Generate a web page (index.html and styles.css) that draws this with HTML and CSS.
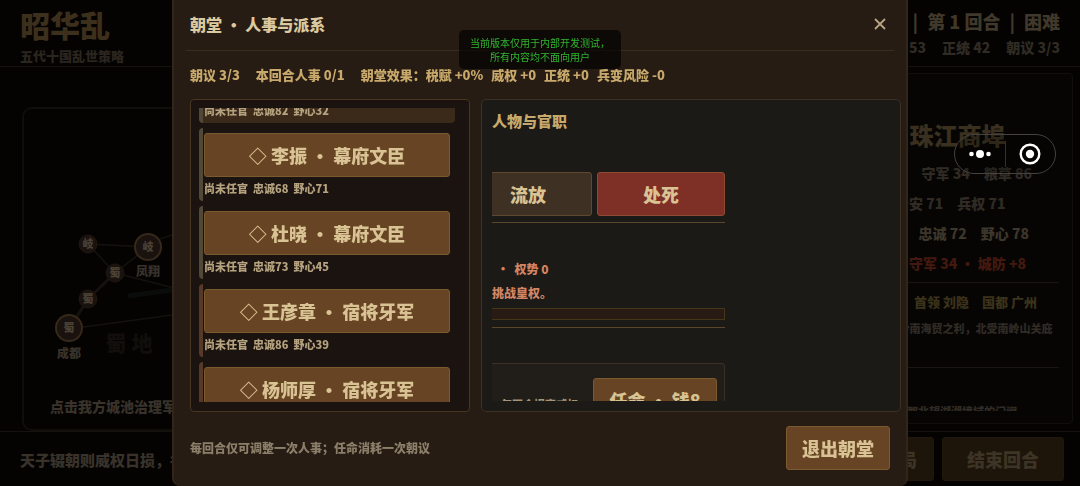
FILE: index.html
```html
<!DOCTYPE html>
<html lang="zh-CN">
<head>
    <meta charset="UTF-8">
    <title>昭华乱</title>
    <meta name="viewport" content="width=device-width, initial-scale=1">
    <link rel="stylesheet" href="styles.css">
</head>
<body>
    <div class="game">
        <header class="topbar">
            <div class="brand">
                <h1>昭华乱</h1>
                <p>五代十国乱世策略</p>
            </div>
            <div class="turn">
                <div class="turn-main"><span>开平元年</span><i>|</i><span>第 1 回合</span><i>|</i><span>困难</span></div>
                <div class="turn-stats"><span>威权 53</span><span>正统 42</span><span>朝议 3/3</span></div>
            </div>
        </header>

        <main class="board">
            <section class="map">
                <svg class="map-canvas" aria-label="地图">
                    <g class="roads">
                        <path d="M64 135L124 138"/>
                        <path d="M64 135L91 164L124 138Q136 127 158 124"/>
                        <path d="M91 164L170 184"/>
                        <path d="M45 220L170 203"/>
                        <path class="main-road" d="M91 164L64 190L45 220"/>
                    </g>
                    <path class="river" d="M104 187L170 178"/>
                    <text class="region" x="105" y="242">蜀 地</text>
                    <g class="town">
                        <circle cx="64" cy="135" r="9"/><text x="64" y="139">岐</text>
                        <circle cx="91" cy="164" r="9"/><text x="91" y="168">蜀</text>
                        <circle cx="64" cy="190" r="9"/><text x="64" y="194">蜀</text>
                    </g>
                    <g class="city">
                        <circle cx="124" cy="138" r="13"/><text x="124" y="142">岐</text>
                        <circle cx="45" cy="219" r="13"/><text x="45" y="223">蜀</text>
                    </g>
                    <g class="city-name">
                        <text x="124" y="167">凤翔</text>
                        <text x="45" y="249">成都</text>
                    </g>
                </svg>
                <p class="map-hint">点击我方城池治理军政</p>
            </section>

            <aside class="city-panel">
                <div class="city-scroll">
                    <h2>清海军 ·&nbsp; 珠江商埠</h2>
                    <p>民心 60　商业 72　守军 34　粮草 86</p>
                    <p>势力　南汉国　治安 71　兵权 71</p>
                    <p class="warm">守将 刘隐　统 78　忠诚 72　野心 78</p>
                    <p class="enemy">敌对势力　南汉　守军 34 · 城防 +8</p>
                    <hr>
                    <p class="leader">中立势力　清海军　首领 刘隐　国都 广州</p>
                    <p class="intro">坐拥 珠江口商埠，得岭南海贸之利，北受南岭山关庇</p>
                    <hr class="wide">
                    <p class="intro">广州城池富庶，岭表诸郡北望湖湘境域的门阙</p>
                </div>
            </aside>
        </main>

        <footer class="bottombar">
            <p>天子辍朝则威权日损，每回合须临朝议政</p>
            <div class="bottom-actions">
                <button type="button">存档布局</button>
                <button type="button" class="end-turn">结束回合</button>
            </div>
        </footer>
    </div>

    <div class="overlay">
        <div class="dialog" role="dialog" aria-labelledby="court-title">
            <header class="dialog-head">
                <h2 id="court-title">朝堂 · 人事与派系</h2>
                <button type="button" class="close" aria-label="关闭">
                    <svg width="12" height="12" viewBox="0 0 12 12"><path d="M1 1L11 11M11 1L1 11"/></svg>
                </button>
            </header>
            <div class="court-stats">
                <span>朝议 3/3</span>
                <span>本回合人事 0/1</span>
                <div class="effects">
                    <span>朝堂效果：税赋 +0%</span>
                    <span>威权 +0</span>
                    <span>正统 +0</span>
                    <span>兵变风险 -0</span>
                </div>
            </div>

            <div class="dialog-body">
                <section class="officials">
                    <div class="official-list">
                        <article class="official selected">
                            <p>尚未任官&nbsp; 忠诚82&nbsp; 野心32</p>
                        </article>
                        <article class="official civil">
                            <button type="button">◇ 李振 · 幕府文臣</button>
                            <p>尚未任官&nbsp; 忠诚68&nbsp; 野心71</p>
                        </article>
                        <article class="official civil">
                            <button type="button">◇ 杜晓 · 幕府文臣</button>
                            <p>尚未任官&nbsp; 忠诚73&nbsp; 野心45</p>
                        </article>
                        <article class="official guard">
                            <button type="button">◇ 王彦章 · 宿将牙军</button>
                            <p>尚未任官&nbsp; 忠诚86&nbsp; 野心39</p>
                        </article>
                        <article class="official guard">
                            <button type="button">◇ 杨师厚 · 宿将牙军</button>
                        </article>
                    </div>
                </section>

                <section class="detail">
                    <h3>人物与官职</h3>
                    <div class="detail-scroll">
                        <div class="punish">
                            <button type="button" class="exile">流放</button>
                            <button type="button" class="execute">处死</button>
                        </div>
                        <div class="faction">
                            <p class="power">·&nbsp; 权势 0</p>
                            <p>挑战皇权。</p>
                            <div class="power-bar"></div>
                        </div>
                        <div class="post">
                            <span>每回合提高威权</span>
                            <button type="button">任命 · 钱8</button>
                        </div>
                    </div>
                </section>
            </div>

            <footer class="dialog-foot">
                <p>每回合仅可调整一次人事；任命消耗一次朝议</p>
                <button type="button">退出朝堂</button>
            </footer>
        </div>
    </div>

    <div class="notice">当前版本仅用于内部开发测试，<br>所有内容均不面向用户</div>

    <div class="capsule">
        <button type="button" aria-label="更多">
            <svg width="24" height="24" viewBox="0 0 24 24"><circle cx="3.5" cy="12" r="2.3"/><circle cx="12" cy="12" r="4"/><circle cx="20.5" cy="12" r="2.3"/></svg>
        </button>
        <button type="button" aria-label="退出">
            <svg width="24" height="24" viewBox="0 0 24 24"><circle class="ring" cx="12" cy="12" r="9.3"/><circle cx="12" cy="12" r="4.2"/></svg>
        </button>
    </div>
</body>
</html>
```

FILE: styles.css
```css
* {
    box-sizing: border-box;
}

body {
    margin: 0;
    height: 100vh;
    overflow: hidden;
    background: #040302;
    color: #38322a;
    font-family: "Noto Sans CJK SC", "Noto Sans", sans-serif;
    font-weight: 900;
}

h1, h2, h3, p {
    margin: 0;
    font-weight: 900;
}

button {
    height: 44px;
    padding: 0;
    border: 1px solid #7b5a30;
    border-radius: 3px;
    background: #674423;
    color: #d9c394;
    font: inherit;
    font-size: 18px;
    white-space: nowrap;
    cursor: pointer;
}

/* 主界面 */
.game {
    height: 100vh;
    display: flex;
    flex-direction: column;
}

.topbar {
    display: flex;
    justify-content: space-between;
    padding: 4px 20px 0;
    height: 67px;
    border-bottom: 1px solid #15110c;
}

.brand h1 {
    font-size: 30px;
    line-height: 40px;
    color: #3c2f1b;
}

.brand p {
    font-size: 13px;
    line-height: 24px;
    color: #2a251f;
}

.turn {
    padding-top: 3px;
}

.turn-main {
    font-size: 18px;
    line-height: 28px;
    text-align: right;
    color: #40382b;
}

.turn-main i {
    margin: 0 9px;
    font-style: normal;
}

.turn-stats {
    display: flex;
    justify-content: flex-end;
    gap: 16px;
    font-size: 14px;
    line-height: 24px;
    color: #302b24;
}

.board {
    flex: 1;
    min-height: 0;
    display: flex;
    gap: 10px;
    padding: 0 7px 0 22px;
}

.map {
    flex: 1;
    margin-top: 40px;
    border: 2px solid #100e0b;
    border-radius: 10px;
    display: flex;
    flex-direction: column;
}

.map-canvas {
    flex: 1;
    width: 100%;
    min-height: 0;
    font-size: 11px;
    text-anchor: middle;
    fill: #4a4034;
    overflow: visible;
}

.roads path {
    fill: none;
    stroke: #15120e;
    stroke-width: 1.5;
}

.roads .main-road {
    stroke-width: 3;
}

.river {
    stroke: #0a0c0b;
    stroke-width: 5;
}

.region {
    font-size: 21px;
    fill: #110e0b;
}

.town circle {
    fill: #1a120e;
    stroke: #1e160f;
}

.city circle {
    fill: #1a120e;
    stroke: #36281a;
    stroke-width: 2;
}

.city-name {
    font-size: 12px;
    fill: #38322a;
}

.map-hint {
    padding: 0 26px 11px;
    font-size: 14px;
    line-height: 24px;
}

.city-panel {
    width: 293px;
    margin: 6px 0 7px;
    padding: 38px 13px 12px 16px;
    border: 1px solid #120e0a;
    border-radius: 4px;
    background: #070504;
}

.city-scroll {
    height: 100%;
    overflow: hidden;
    white-space: nowrap;
}

.city-scroll h2 {
    font-size: 24px;
    line-height: 46px;
    color: #3a301f;
}

.city-scroll p {
    font-size: 14px;
    line-height: 30px;
    color: #302b24;
}

.city-scroll .warm {
    color: #3d362a;
}

.city-scroll .enemy {
    color: #43190f;
}

.city-scroll .leader {
    font-size: 13px;
    color: #3a321a;
}

.city-scroll .intro {
    font-size: 11px;
    line-height: 22px;
    color: #302b24;
}

.city-scroll hr {
    margin: 4px 0;
    border: 0;
    border-top: 1px solid #1a1510;
}

.city-scroll .wide {
    margin: 28px 0 32px;
}

.bottombar {
    display: flex;
    justify-content: space-between;
    padding: 5px 16px 4px 20px;
    border-top: 1px solid #15110c;
}

.bottombar p {
    font-size: 15px;
    line-height: 45px;
}

.bottom-actions {
    display: flex;
    gap: 8px;
}

.bottom-actions button {
    padding: 0 16px;
    border-color: #21170d;
    background: #1d140a;
    color: #3d3425;
}

.bottom-actions .end-turn {
    width: 122px;
}

/* 朝堂弹窗 */
.overlay {
    position: fixed;
    inset: 0;
    display: flex;
    justify-content: center;
}

.dialog {
    width: 92%;
    max-width: 736px;
    height: 100vh;
    display: flex;
    flex-direction: column;
    border: 2px solid #32261a;
    border-width: 0 2px;
    border-radius: 0 0 8px 8px;
    background: #261c14;
}

.dialog-head {
    display: flex;
    align-items: center;
    justify-content: space-between;
    height: 51px;
    margin: 0 12px;
    padding: 0 4px 2px;
    border-bottom: 1px solid #3a2d1e;
}

.dialog-head h2 {
    font-size: 16px;
    line-height: 24px;
    color: #dcc9a0;
}

.close {
    width: 20px;
    height: 24px;
    border: 0;
    background: none;
}

.close svg {
    display: block;
    margin: 0 auto;
    fill: none;
    stroke: #b8a581;
    stroke-width: 1.8;
}

.court-stats {
    display: flex;
    gap: 16px;
    padding: 0 16px;
    font-size: 13px;
    line-height: 48px;
    white-space: nowrap;
    color: #c8a96b;
}

.effects {
    display: flex;
    gap: 8px;
}

.dialog-body {
    flex: 1;
    min-height: 0;
    display: grid;
    grid-template-columns: 2fr 3fr;
    grid-template-rows: 100%;
    gap: 11px;
    margin: 0 5px 0 16px;
}

.officials {
    padding: 8px 14px 9px 8px;
    border: 1px solid #493621;
    border-radius: 4px;
    background: #1b130f;
}

.official-list {
    height: 100%;
    overflow: hidden;
    display: flex;
    flex-direction: column;
    gap: 5px;
}

.official {
    flex: none;
    padding: 5px 5px 0 1px;
    border-left: 4px solid #514837;
    border-radius: 4px;
}

.official.guard {
    border-left-color: #57392a;
}

.official button {
    display: block;
    width: 100%;
}

.official p {
    padding-bottom: 2px;
    font-size: 11px;
    line-height: 22px;
    color: #b5a27f;
}

/* 滚动到顶部边缘外的一项 */
.official.selected {
    height: 15px;
    padding: 0 0 0 1px;
    display: flex;
    align-items: flex-end;
    overflow: hidden;
    border-radius: 0 0 4px 4px;
    background: #3b291a;
}

.detail {
    display: flex;
    flex-direction: column;
    padding: 9px 10px 10px;
    border: 1px solid #3d3123;
    border-radius: 5px;
    background: #1b1a16;
}

.detail h3 {
    font-size: 15px;
    line-height: 24px;
    color: #c8a96b;
}

.detail-scroll {
    flex: 1;
    min-height: 0;
    width: 233px;
    max-width: 100%;
    padding-top: 39px;
    overflow: hidden;
}

.punish {
    display: flex;
    justify-content: flex-end;
    gap: 5px;
    padding-bottom: 6px;
    border-bottom: 1px solid #5b4629;
}

.punish button {
    flex: none;
    width: 128px;
}

.punish .exile {
    border-color: #5d4930;
    background: #3e3023;
}

.punish .execute {
    border-color: #8f4a33;
    background: #7e3027;
}

.faction {
    padding: 34px 0 7px;
    border-bottom: 1px solid #5b4629;
    font-size: 12px;
    line-height: 24px;
    color: #d38462;
}

.power {
    padding-left: 5px;
}

.power-bar {
    height: 12px;
    margin-top: 3px;
    border: 1px solid #453519;
    border-left: 0;
    background: #281b13;
}

.post {
    display: flex;
    justify-content: space-between;
    margin-top: 35px;
    padding: 14px 7px 14px 9px;
    border: 1px solid #393127;
    border-left: 0;
    border-radius: 0 4px 4px 0;
    background: #211d18;
}

.post span {
    font-size: 11px;
    line-height: 52px;
    color: #a3957a;
}

.post button {
    width: 124px;
}

.dialog-foot {
    display: flex;
    align-items: center;
    justify-content: space-between;
    height: 74px;
    padding: 0 16px 2px;
}

.dialog-foot p {
    font-size: 12px;
    line-height: 24px;
    color: #8c7f6a;
}

.dialog-foot button {
    width: 104px;
}

/* 浮层 */
.notice {
    position: fixed;
    top: 30px;
    left: 50%;
    width: 162px;
    margin-left: -81px;
    padding: 6px 0 5px;
    border-radius: 5px;
    background: rgba(0, 0, 0, 0.65);
    color: #2fb52f;
    font-size: 10px;
    line-height: 14px;
    font-weight: 400;
    text-align: center;
    white-space: nowrap;
}

.capsule {
    position: fixed;
    top: 134px;
    right: 24px;
    display: flex;
    width: 102px;
    height: 40px;
    padding: 6px 0;
    border: 1px solid #45423f;
    border-radius: 20px;
    background: rgba(0, 0, 0, 0.2);
}

.capsule button {
    flex: 1;
    display: flex;
    align-items: center;
    justify-content: center;
    height: 26px;
    border: 0;
    background: none;
}

.capsule button + button {
    border-left: 1px solid #33302d;
    border-radius: 0;
}

.capsule svg {
    fill: #fff;
}

.capsule .ring {
    fill: none;
    stroke: #fff;
    stroke-width: 2.4;
}
```
